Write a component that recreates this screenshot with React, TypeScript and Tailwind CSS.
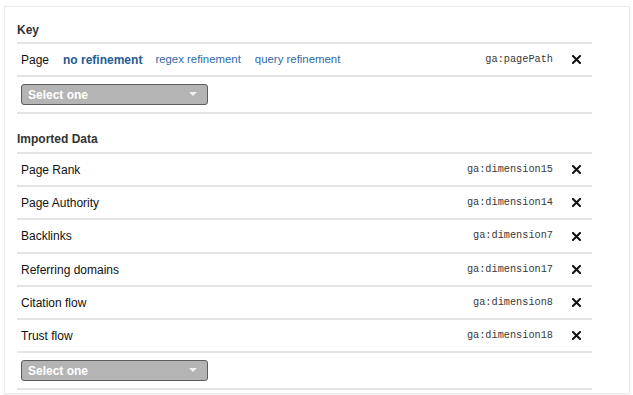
import React from 'react';

type Field = {
  label: string;
  dimension: string;
};

const importedFields: Field[] = [
  { label: 'Page Rank', dimension: 'ga:dimension15' },
  { label: 'Page Authority', dimension: 'ga:dimension14' },
  { label: 'Backlinks', dimension: 'ga:dimension7' },
  { label: 'Referring domains', dimension: 'ga:dimension17' },
  { label: 'Citation flow', dimension: 'ga:dimension8' },
  { label: 'Trust flow', dimension: 'ga:dimension18' },
];

function RemoveIcon() {
  return (
    <svg width="9" height="9" viewBox="0 0 9 9" className="ml-[19px] shrink-0">
      <path d="M1 1 L8 8 M8 1 L1 8" stroke="#111" strokeWidth="2" strokeLinecap="square" />
    </svg>
  );
}

function Dimension({ value }: { value: string }) {
  return (
    <span className="ml-auto font-['Liberation_Mono','Courier_New',monospace] text-[10.25px] text-[#3a3a3a]">
      {value}
    </span>
  );
}

function SelectOne() {
  return (
    <div className="flex h-[21px] w-[187px] items-center rounded-[3px] border border-[#5c5c5c] bg-[#b4b4b4] pl-[6px] pr-[10px]">
      <span className="text-[12px] font-bold text-white">Select one</span>
      <svg width="8" height="5" viewBox="0 0 8 5" className="ml-auto">
        <path d="M0 0 L8 0 L4 4 Z" fill="#f2f2f2" />
      </svg>
    </div>
  );
}

function SectionTitle({ title, className }: { title: string; className: string }) {
  return (
    <div className={`flex items-end border-b-2 border-[#e4e4e4] text-[12px] font-bold leading-[14px] text-[#333] ${className}`}>
      {title}
    </div>
  );
}

export default function App() {
  return (
    <div className="h-[395px] w-[633px] bg-white pl-[4px] pt-[6px] font-['Liberation_Sans',Arial,sans-serif]">
      <div className="h-[388px] w-[626px] border border-[#ececec] bg-white pl-[12px] pr-[37px] shadow-[0_1px_3px_rgba(0,0,0,0.06)]">
        <SectionTitle title="Key" className="h-[37px] pb-[5px]" />

        <div className="flex h-[33px] items-center border-b-2 border-[#e4e4e4] pl-[4px] pr-[11px] text-[12px] text-[#111]">
          <span>Page</span>
          <span className="ml-[14px] font-bold text-[#245b93]">no refinement</span>
          <span className="ml-[13px] text-[11.4px] text-[#2f6aa8]">regex refinement</span>
          <span className="ml-[14px] text-[11.4px] text-[#2f6aa8]">query refinement</span>
          <Dimension value="ga:pagePath" />
          <RemoveIcon />
        </div>

        <div className="flex h-[37px] items-center border-b-2 border-[#e4e4e4] pl-[4px]">
          <SelectOne />
        </div>

        <SectionTitle title="Imported Data" className="h-[40px] pb-[6px]" />

        {importedFields.map((field, i) => (
          <div
            key={field.dimension}
            className={`flex items-center border-b-2 border-[#e4e4e4] pl-[4px] pr-[11px] text-[12px] text-[#111] ${i === 2 ? 'h-[34px]' : 'h-[33px]'}`}
          >
            <span>{field.label}</span>
            <Dimension value={field.dimension} />
            <RemoveIcon />
          </div>
        ))}

        <div className="flex h-[37px] items-center border-b-2 border-[#e4e4e4] pl-[4px]">
          <SelectOne />
        </div>
      </div>
    </div>
  );
}
